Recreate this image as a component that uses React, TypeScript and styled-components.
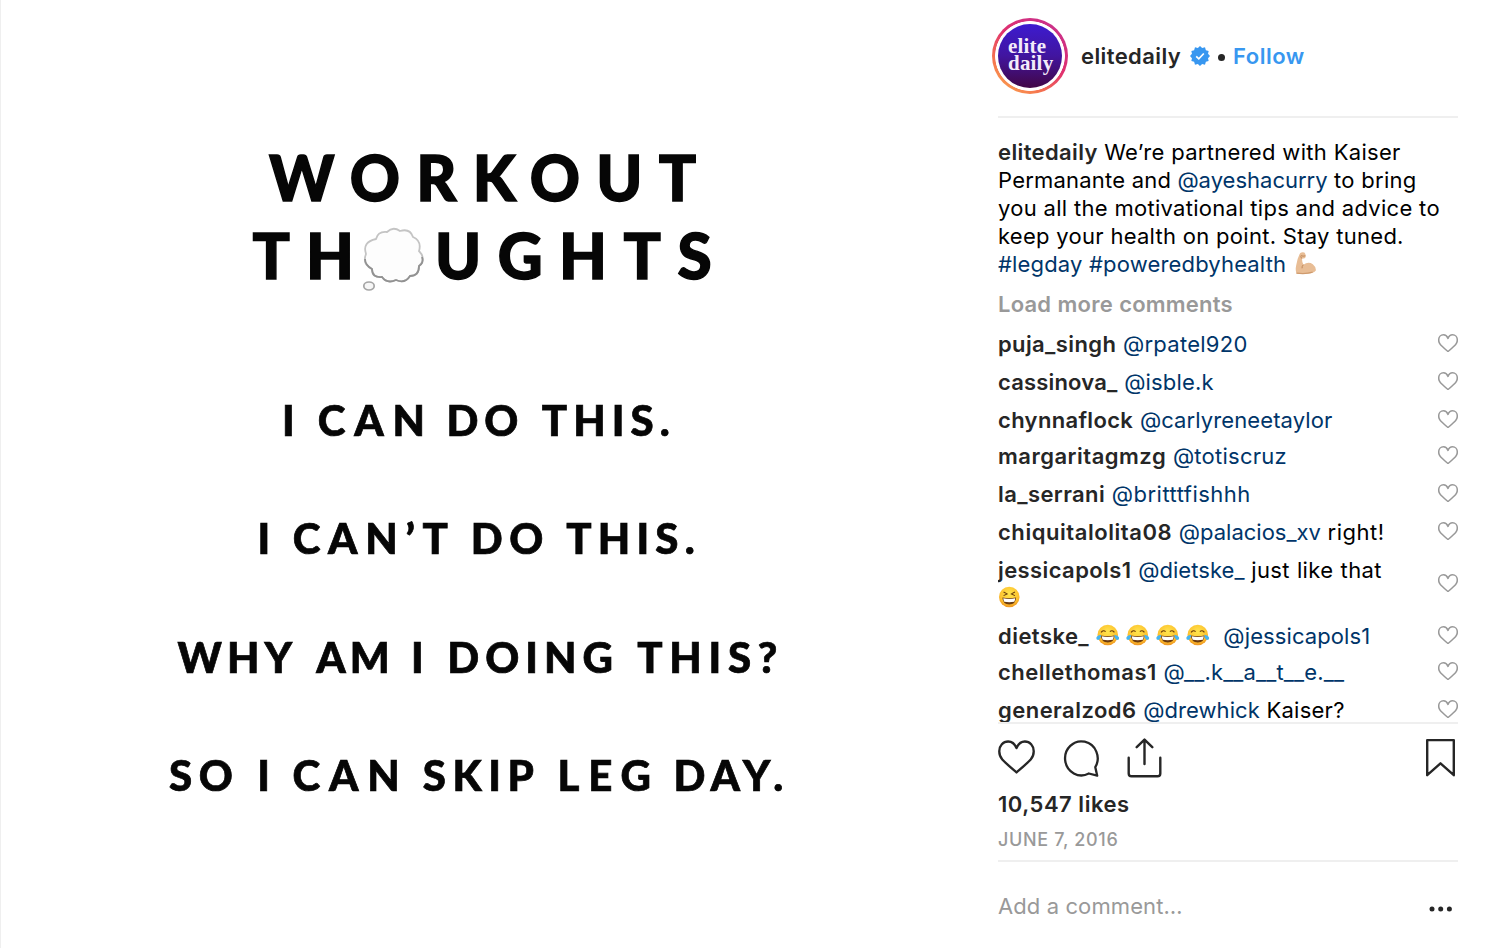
import React from "react";
import styled, { createGlobalStyle } from "styled-components";

type Run = { text: string; kind?: "name" | "mention"; track?: number };
type Comment = { runs: (Run | "joy" | "laugh" | "br")[]; height: number };
type PosterWord = { text: string; track: number; lead?: number };

const posterLines: { indent: number; words: PosterWord[] }[] = [
  {
    indent: 281,
    words: [
      { text: "I", track: 0 },
      { text: "CAN", track: 8.8, lead: 23 },
      { text: "DO", track: 5.6, lead: 12.8 },
      { text: "THIS.", track: 6.1, lead: 17.9 },
    ],
  },
  {
    indent: 256.5,
    words: [
      { text: "I", track: 0 },
      { text: "CAN’T", track: 7.7, lead: 22.5 },
      { text: "DO", track: 6.6, lead: 15.1 },
      { text: "THIS.", track: 6.2, lead: 16.2 },
    ],
  },
  {
    indent: 176.5,
    words: [
      { text: "WHY", track: 5 },
      { text: "AM", track: 4, lead: 19.3 },
      { text: "I", track: 0, lead: 17.3 },
      { text: "DOING", track: 6, lead: 23.5 },
      { text: "THIS?", track: 6.7, lead: 18.3 },
    ],
  },
  {
    indent: 168,
    words: [
      { text: "SO", track: 6.5 },
      { text: "I", track: 0, lead: 18 },
      { text: "CAN", track: 8.8, lead: 22.5 },
      { text: "SKIP", track: 6.6, lead: 14.2 },
      { text: "LEG", track: 8.8, lead: 17 },
      { text: "DAY.", track: 6.1, lead: 13.7 },
    ],
  },
];

const comments: Comment[] = [
  {
    height: 38,
    runs: [
      { text: "puja_singh", kind: "name", track: 0.38 },
      { text: "@rpatel920", kind: "mention", track: 0.26 },
    ],
  },
  {
    height: 38,
    runs: [
      { text: "cassinova_", kind: "name", track: 0.17 },
      { text: "@isble.k", kind: "mention", track: 0.18 },
    ],
  },
  {
    height: 36,
    runs: [
      { text: "chynnaflock", kind: "name", track: 0.34 },
      { text: "@carlyreneetaylor", kind: "mention", track: 0.1 },
    ],
  },
  {
    height: 38,
    runs: [
      { text: "margaritagmzg", kind: "name", track: 0.5 },
      { text: "@totiscruz", kind: "mention", track: 0.25 },
    ],
  },
  {
    height: 38,
    runs: [
      { text: "la_serrani", kind: "name", track: 0.4 },
      { text: "@britttfishhh", kind: "mention", track: 0.48 },
    ],
  },
  {
    height: 38,
    runs: [
      { text: "chiquitalolita08", kind: "name", track: 0.55 },
      { text: "@palacios_xv", kind: "mention" },
      { text: "right!", track: 0.5 },
    ],
  },
  {
    height: 66,
    runs: [
      { text: "jessicapols1", kind: "name", track: 0.4 },
      { text: "@dietske_", kind: "mention", track: 0.05 },
      { text: "just like that", track: 0.38 },
      "br",
      "laugh",
    ],
  },
  {
    height: 36,
    runs: [
      { text: "dietske_", kind: "name", track: 0.45 },
      "joy",
      "joy",
      "joy",
      "joy",
      { text: "\u00a0@jessicapols1", kind: "mention", track: 0.1 },
    ],
  },
  {
    height: 38,
    runs: [
      { text: "chellethomas1", kind: "name", track: 0.5 },
      { text: "@__.k__a__t__e.__", kind: "mention", track: 0.16 },
    ],
  },
  {
    height: 38,
    runs: [
      { text: "generalzod6", kind: "name", track: 0.47 },
      { text: "@drewhick", kind: "mention", track: 0.05 },
      { text: "Kaiser?", track: 0.25 },
    ],
  },
];

const runColors = { name: "#262626", mention: "#003569", plain: "#000" };

const VerifiedBadge = () => {
  const points = Array.from({ length: 24 }, (_, i) => {
    const r = i % 2 ? 8.3 : 10;
    const a = (i * Math.PI) / 12;
    return `${(10 + r * Math.cos(a)).toFixed(2)},${(10 + r * Math.sin(a)).toFixed(2)}`;
  }).join(" ");
  return (
    <svg width="20" height="20" viewBox="0 0 20 20">
      <polygon points={points} fill="#3897f0" />
      <path d="M6.2 10.3l2.6 2.5 5-5.3" fill="none" stroke="#fff" strokeWidth="1.7" />
    </svg>
  );
};

const Heart = ({ size, color, stroke }: { size: number; color: string; stroke: number }) => (
  <svg width={size} height={(size * 35) / 38} viewBox="0 0 38 35">
    <path
      d="M19 33.4C17.5 32 8 24 4.4 20C2.2 17.5 1.3 14.8 1.3 11.5C1.3 5.8 5.3 1.5 10.4 1.5C14.2 1.5 17.2 3.9 19 8.3C20.8 3.9 23.8 1.5 27.6 1.5C32.7 1.5 36.7 5.8 36.7 11.5C36.7 14.8 35.8 17.5 33.6 20C30 24 20.5 32 19 33.4Z"
      fill="none"
      stroke={color}
      strokeWidth={stroke}
      strokeLinejoin="round"
    />
  </svg>
);

const FaceGradient = ({ id }: { id: string }) => (
  <radialGradient id={id} cx="50%" cy="35%" r="65%">
    <stop offset="0%" stopColor="#ffe64d" />
    <stop offset="70%" stopColor="#fdc22f" />
    <stop offset="100%" stopColor="#ee9420" />
  </radialGradient>
);

const Joy = () => (
  <EmojiBox>
    <svg width="24" height="22" viewBox="0 0 24 22">
      <defs>
        <FaceGradient id="joyFace" />
      </defs>
      <circle cx="12" cy="11" r="10.5" fill="url(#joyFace)" />
      <path d="M5.2 8.4q2.3-3 4.6-.8M14.2 7.6q2.3-2.2 4.6.8" fill="none" stroke="#6b3f0c" strokeWidth="1.2" />
      <path d="M5 11.6q7 1.6 14 0q-.3 7-7 7t-7-7z" fill="#6a3a10" />
      <path d="M5.9 12.4q6.1 1.1 12.2 0q-.2 2.6-1 3.4q-5.1.9-10.2 0q-.8-1-1-3.4z" fill="#fff" />
      <path
        d="M5.3 10.7q-4.8.8-5 3.4q0 2 1.9 2q2.6-.3 3.1-5.4zM18.7 10.7q4.8.8 5 3.4q0 2-1.9 2q-2.6-.3-3.1-5.4z"
        fill="#45b4ee"
      />
    </svg>
  </EmojiBox>
);

const Laugh = () => (
  <EmojiBox>
    <svg width="24" height="22" viewBox="0 0 24 22">
      <defs>
        <FaceGradient id="laughFace" />
      </defs>
      <circle cx="11.5" cy="11" r="10.5" fill="url(#laughFace)" />
      <path d="M5.7 5.8l3.6 2l-3.6 1.8M17.3 5.800l-3.600 2l3.600 1.800" fill="none" stroke="#6b3f0c" strokeWidth="1.1" />
      <path d="M4.5 11.6q7 1.6 14 0q-.3 7-7 7t-7-7z" fill="#6a3a10" />
      <path d="M5.4 12.4q6.1 1.1 12.2 0q-.2 2.6-1 3.4q-5.1.9-10.2 0q-.8-1-1-3.4z" fill="#fff" />
    </svg>
  </EmojiBox>
);

const Biceps = () => (
  <BicepsBox>
    <svg width="24" height="24" viewBox="0 0 24 24">
      <path
        d="M6.4 1.7Q8.5.5 10.6 1.4Q12.4 3 11.8 6.2Q10.8 8 8.3 7.3Q7.9 10.6 9.6 13.700Q14.5 10.3 19.2 13.2Q22.7 16 22.3 19.6Q20.5 22.6 13 23Q5.5 23.6 2.5 22.6Q1.2 19.5 2.2 14.5Q3.3 7 6.4 1.7Z"
        fill="#e8bd95"
      />
      <path d="M9.6 13.7q-1.6 1.6-1.400 3.700M7 4.5q2.2.9 4.6.2M8.3 7.3q-1.4-.6-1.6-2" fill="none" stroke="#bd8658" />
      <path d="M2.5 22.3q9.500 1.300 16.500-1" fill="none" stroke="#cf9b6e" strokeWidth="1.2" />
    </svg>
  </BicepsBox>
);

const ThoughtCloud = () => (
  <CloudBox>
    <svg width="64" height="66" viewBox="0 0 64 66">
      <path
        d="M14 13Q16 5 25 6Q31 0 38 5Q48 2 51 11Q60 15 57 25Q65 33 57 40Q57 50 48 50Q43 58 34 54Q25 58 20 51Q10 52 10 43Q0 38 4 28Q0 16 14 13Z"
        fill="#fdfdfd"
        stroke="#c4c4c4"
        strokeWidth="1.8"
      />
      <path
        d="M60 31Q62 37 57 40Q57 50 48 50Q43 58 34 54Q25 58 20 51Q10 52 10 43Q3 39 3 33"
        fill="none"
        stroke="#929292"
        strokeWidth="1.8"
      />
      <ellipse cx="7" cy="60" rx="5.2" ry="4" fill="#f7f7f7" stroke="#a5a5a5" strokeWidth="1.7" />
    </svg>
  </CloudBox>
);

const TextRun = ({ text, kind, track = 0 }: Run) => (
  <Span $color={runColors[kind || "plain"]} $bold={kind === "name"} $track={track}>
    {text}
  </Span>
);

function App() {
  return (
    <Page>
      <GlobalStyle />
      <Poster>
        <Headline $indent={268}>
          <Word $track={16.2}>WORKOUT</Word>
        </Headline>
        <Headline $indent={251.5}>
          <Word $track={16}>TH</Word>
          <ThoughtCloud />
          <Word $track={16.5}>UGHTS</Word>
        </Headline>
        <Thoughts>
          {posterLines.map((line, i) => (
            <Thought key={i} $indent={line.indent}>
              {line.words.map((w, j) => (
                <Word key={j} $track={w.track} $lead={w.lead}>
                  {w.text}
                </Word>
              ))}
            </Thought>
          ))}
        </Thoughts>
      </Poster>
      <Side>
        <Header>
          <Ring>
            <Avatar>
              elite
              <br />
              daily
            </Avatar>
          </Ring>
          <UserName>elitedaily</UserName>
          <VerifiedBadge />
          <Dot />
          <Follow>Follow</Follow>
        </Header>
        <Comments>
          <Caption>
            <TextRun text="elitedaily" kind="name" track={0.38} />{" "}
            <TextRun text="We’re partnered with Kaiser" track={0.3} />
            <br />
            <TextRun text="Permanante and" track={0.2} />{" "}
            <TextRun text="@ayeshacurry" kind="mention" />{" "}
            <TextRun text="to bring" track={0.3} />
            <br />
            <TextRun text="you all the motivational tips and advice to" track={0.28} />
            <br />
            <TextRun text="keep your health on point. Stay tuned." track={0.27} />
            <br />
            <TextRun text="#legday #poweredbyhealth" kind="mention" track={0.16} />{" "}
            <Biceps />
          </Caption>
          <LoadMore>Load more comments</LoadMore>
          {comments.map((comment, i) => (
            <CommentRow key={i} $height={comment.height}>
              <CommentText>
                {comment.runs.map((run, j) => (
                  <React.Fragment key={j}>
                    {j > 0 && " "}
                    {run === "joy" && <Joy />}
                    {run === "laugh" && <Laugh />}
                    {run === "br" && <br />}
                    {typeof run === "object" && <TextRun {...run} />}
                  </React.Fragment>
                ))}
              </CommentText>
              <LikeButton>
                <Heart size={20} color="#999" stroke={2.9} />
              </LikeButton>
            </CommentRow>
          ))}
        </Comments>
        <Actions>
          <Heart size={37} color="#262626" stroke={2.4} />
          <svg width="38" height="38" viewBox="0 0 38 38">
            <path
              d="M33.3 27.2A16.3 17 0 1 0 26.800 33.500L35.2 35.7Z"
              fill="none"
              stroke="#262626"
              strokeWidth="2.3"
              strokeLinejoin="round"
            />
          </svg>
          <svg width="36" height="40" viewBox="0 0 36 40">
            <path
              d="M1.7 19.8V35.5Q1.7 38.3 4.5 38.3H30.5Q33.3 38.3 33.3 35.5V19.8M17.5 26V2M9.7 9.2L17.5 1.6L25.3 9.2"
              fill="none"
              stroke="#262626"
              strokeWidth="2.4"
              strokeLinecap="round"
              strokeLinejoin="round"
            />
          </svg>
          <Bookmark width="30" height="40" viewBox="0 0 30 40">
            <path d="M1.2 2.1H27.8V37.2L14.5 25.3L1.2 37.2Z" fill="none" stroke="#262626" strokeWidth="2.4" strokeLinejoin="round" />
          </Bookmark>
        </Actions>
        <Likes>10,547 likes</Likes>
        <PostDate>JUNE 7, 2016</PostDate>
        <AddComment>
          <Placeholder>Add a comment…</Placeholder>
          <svg width="24" height="6" viewBox="0 0 24 6">
            <circle cx="3" cy="3" r="2.5" fill="#262626" />
            <circle cx="11.7" cy="3" r="2.5" fill="#262626" />
            <circle cx="20.4" cy="3" r="2.5" fill="#262626" />
          </svg>
        </AddComment>
      </Side>
    </Page>
  );
}

const GlobalStyle = createGlobalStyle`
  body {
    margin: 0;
    background: #fff;
  }
  * {
    box-sizing: border-box;
  }
`;

const Page = styled.div`
  display: flex;
  width: 1492px;
  height: 948px;
  overflow: hidden;
  border-left: 1px solid #efefef;
  background: #fff;
  font-family: Inter, "Liberation Sans", sans-serif;
  font-size: 22px;
  line-height: 28px;
  color: #262626;
`;

const Poster = styled.div`
  width: 957px;
  padding-top: 138px;
  flex-shrink: 0;
  font-family: Lato, sans-serif;
  font-weight: 900;
  color: #060606;
  filter: blur(0.6px);
`;

const Headline = styled.div<{ $indent: number }>`
  display: flex;
  height: 78px;
  padding-left: ${(p) => p.$indent}px;
  font-size: 62px;
  line-height: 78px;
  -webkit-text-stroke: 1.4px #060606;
`;

const Thoughts = styled.div`
  padding-top: 67px;
`;

const Thought = styled.div<{ $indent: number }>`
  display: flex;
  height: 118.4px;
  padding-left: ${(p) => p.$indent}px;
  font-size: 42px;
  line-height: 118px;
  -webkit-text-stroke: 0.7px #060606;
`;

const Word = styled.span<{ $track: number; $lead?: number }>`
  margin-left: ${(p) => p.$lead || 0}px;
  letter-spacing: ${(p) => p.$track}px;
  white-space: nowrap;
`;

const CloudBox = styled.div`
  width: 64px;
  height: 66px;
  margin: 10px 9px 0 -8px;
  line-height: 0;
`;

const Side = styled.div`
  width: 460px;
  margin-left: 40px;
  flex-shrink: 0;
`;

const Header = styled.div`
  display: flex;
  align-items: center;
  height: 118px;
  margin-left: -6px;
  padding-bottom: 6px;
  position: relative;
  &::after {
    content: "";
    position: absolute;
    left: 6px;
    right: 0;
    bottom: 0;
    height: 2px;
    background: #efefef;
  }
`;

const Ring = styled.div`
  display: flex;
  align-items: center;
  justify-content: center;
  width: 76px;
  height: 76px;
  border-radius: 50%;
  background: radial-gradient(circle, #fff 34.5px, transparent 35.2px),
    linear-gradient(35deg, #fba04e 8%, #f5734f 28%, #e0306f 55%, #c9308c 90%);
`;

const Avatar = styled.div`
  width: 64px;
  height: 64px;
  padding: 14px 0 0 10px;
  border-radius: 50%;
  background: linear-gradient(#3d1bd0, #41159f 50%, #420646);
  color: #f3ebfa;
  font-family: "Liberation Serif", serif;
  font-size: 21px;
  font-weight: 700;
  line-height: 16.5px;
  letter-spacing: 0.2px;
`;

const UserName = styled.span`
  margin: 0 9px 0 13px;
  font-weight: 600;
  letter-spacing: 0.4px;
`;

const Dot = styled.span`
  width: 7px;
  height: 7px;
  margin: 3px 8.5px 0 7.5px;
  border-radius: 50%;
  background: #262626;
`;

const Follow = styled.span`
  font-weight: 600;
  letter-spacing: 0.5px;
  color: #3897f0;
`;

const Comments = styled.div`
  height: 606px;
  padding-top: 20px;
  overflow: hidden;
  border-bottom: 2px solid #efefef;
  word-spacing: 0.5px;
`;

const Caption = styled.div`
  height: 140px;
  word-spacing: 0.1px;
  white-space: nowrap;
`;

const Span = styled.span<{ $color: string; $bold: boolean; $track: number }>`
  color: ${(p) => p.$color};
  font-weight: ${(p) => (p.$bold ? 600 : 400)};
  letter-spacing: ${(p) => p.$track}px;
`;

const EmojiBox = styled.span`
  display: inline-flex;
  width: 23.5px;
  height: 22px;
  align-items: flex-end;
  vertical-align: -2px;
`;

const BicepsBox = styled(EmojiBox)`
  margin-left: 1.5px;
  vertical-align: -3px;
`;

const LoadMore = styled.div`
  margin: 12px 0;
  font-weight: 600;
  letter-spacing: 0.22px;
  color: #999;
`;

const CommentRow = styled.div<{ $height: number }>`
  display: flex;
  justify-content: space-between;
  align-items: center;
  height: ${(p) => p.$height}px;
  padding-bottom: ${(p) => (p.$height === 36 ? 8 : 10)}px;
`;

const CommentText = styled.div`
  white-space: nowrap;
`;

const LikeButton = styled.div`
  display: flex;
  padding-bottom: 2px;
`;

const Actions = styled.div`
  display: flex;
  height: 66px;
  padding-top: 16px;
  > svg:nth-child(2) {
    margin-left: 27px;
  }
  > svg:nth-child(3) {
    margin: -2px 0 0 27px;
  }
`;

const Bookmark = styled.svg`
  margin: -2px 2px 0 auto;
`;

const Likes = styled.div`
  font-weight: 600;
  letter-spacing: 0.52px;
`;

const PostDate = styled.div`
  height: 44px;
  padding-top: 8px;
  border-bottom: 2px solid #efefef;
  font-size: 18px;
  font-weight: 500;
  letter-spacing: 0.65px;
  color: #999;
`;

const AddComment = styled.div`
  display: flex;
  align-items: center;
  justify-content: space-between;
  height: 88px;
  padding-right: 5px;
  svg {
    margin-top: 5px;
  }
`;

const Placeholder = styled.span`
  letter-spacing: 0.1px;
  color: #999;
`;

export default App;
